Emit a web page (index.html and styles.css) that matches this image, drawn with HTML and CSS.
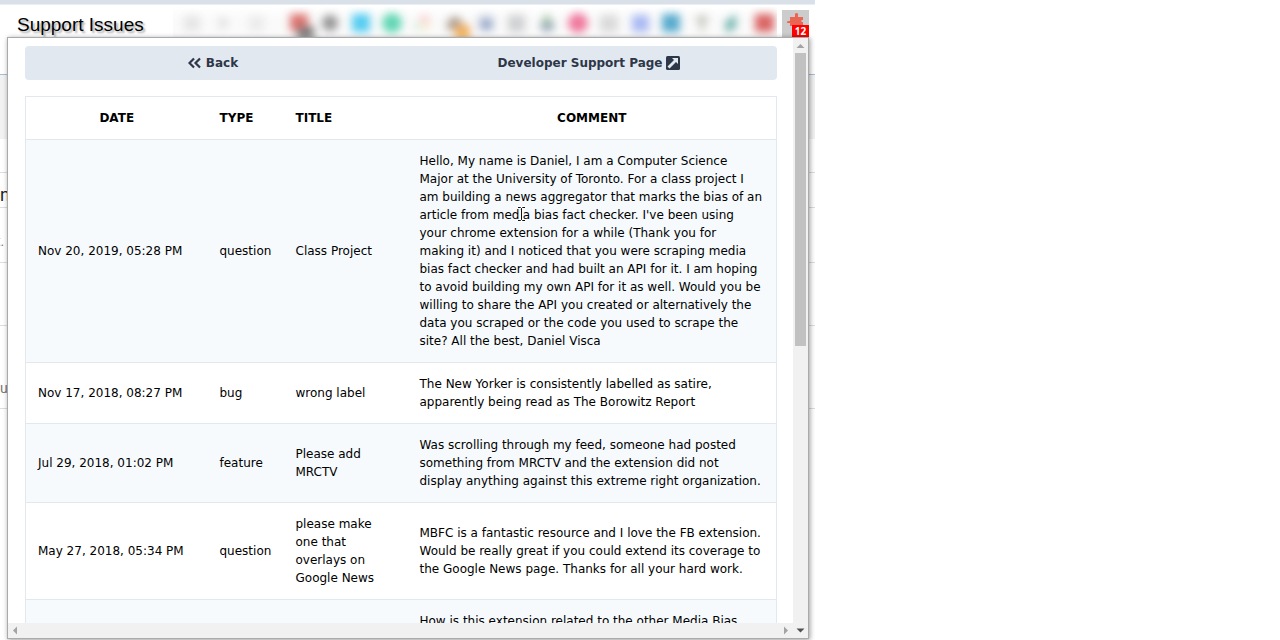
FILE: index.html
```html
<!DOCTYPE html>
<html lang="en">
<head>
<meta charset="utf-8">
<title>Support Issues</title>
<link rel="stylesheet" href="styles.css">
</head>
<body>
<div class="browser">
  <header class="toolbar">
    <h1 class="caption">Support Issues</h1>
    <svg class="extensions" viewBox="0 0 604 30" aria-hidden="true">
      <defs>
        <filter id="soft" x="-10%" y="-60%" width="120%" height="220%"><feGaussianBlur stdDeviation="4"/></filter>
        <linearGradient id="fade" x1="0" x2="0" y1="0" y2="1"><stop offset="0" stop-color="#fff"/><stop offset=".4" stop-color="#fafafa"/></linearGradient>
      </defs>
      <rect width="604" height="30" fill="url(#fade)"/>
      <g filter="url(#soft)" opacity=".88">
        <rect x="11" y="9" width="16" height="15" fill="#e2e2e2"/>
        <path d="M46 8l12 8-12 8z" fill="#dedede"/>
        <rect x="76" y="9" width="15" height="15" fill="#e9e9e9"/>
        <rect x="117" y="7" width="18" height="17" fill="#d9605c"/>
        <rect x="124" y="19" width="17" height="13" fill="#686868"/>
        <circle cx="157" cy="16" r="8" fill="#858585"/>
        <rect x="179" y="7" width="18" height="18" fill="#3cc6f0"/>
        <circle cx="219" cy="16" r="10" fill="#4bd2aa"/>
        <rect x="247" y="9" width="9" height="6" fill="#f9bfc0"/>
        <rect x="242" y="16" width="5" height="7" fill="#c7e7d0"/>
        <rect x="250" y="16" width="6" height="7" fill="#f7e5b9"/>
        <path d="M274 16q8-13 16 0v7h-16z" fill="#9d9080"/>
        <rect x="282" y="18" width="15" height="14" fill="#f0a543"/>
        <rect x="305" y="8" width="16" height="16" fill="#ccd5e3"/>
        <rect x="308" y="13" width="11" height="9" fill="#7890bd"/>
        <rect x="335" y="8" width="17" height="17" fill="#c9cbcd"/>
        <path d="M368 16l6-10 6 10z" fill="#98bd92"/>
        <path d="M367 16h15l-3 8h-10z" fill="#8498ad"/>
        <circle cx="405" cy="16" r="10" fill="#ee6690"/>
        <rect x="427" y="8" width="18" height="17" fill="#d5d5d5"/>
        <rect x="459" y="8" width="17" height="17" fill="#9fb0f2"/>
        <rect x="489" y="7" width="18" height="18" fill="#3f9fc7"/>
        <path d="M522 9h14l-5 8v7h-4v-7z" fill="#b6b6ad"/>
        <path d="M552 15l11-8v14l-10 5z" fill="#5eaaa4"/>
        <rect x="582" y="7" width="19" height="18" fill="#d65050"/>
      </g>
    </svg>
    <button class="puzzle" type="button" aria-label="Extension, 12 notifications">
      <svg width="17" height="16" viewBox="0 0 17 16" aria-hidden="true"><path fill="#ea6553" d="M3 4h5V2.500Q7.500 0 9.500 0T11 2.500V4h5v3h-1.500v2H16v4H3v-3H1.500Q0 10.500 0 9t3-1z"/></svg>
      <span class="badge">12</span>
    </button>
  </header>
  <main class="page">
    <div class="page-head"></div>
    <div class="line line-a"></div>
    <div class="line line-a big">n</div>
    <div class="line line-b">t.</div>
    <div class="line line-c"></div>
    <div class="line line-d">u</div>
  </main>

  <section class="popup">
    <div class="view">
      <nav class="actions">
        <button class="action" type="button">
          <svg width="14" height="12" viewBox="0 0 14 12" fill="none" stroke="#2d3748" stroke-width="2.200" aria-hidden="true"><path d="M6 1.500L1.500 6 6 10.500M12 1.500L7.500 6l4.500 4.500"/></svg>
          Back</button>
        <a class="action" href="#">Developer Support Page
          <svg width="14" height="14" viewBox="0 0 14 14" aria-hidden="true"><rect width="14" height="14" rx="1.500" fill="#2d3748"/><path d="M6 2h6v6l-2-2-6.500 6.500-2-2L8 4z" fill="#e2e8f0"/></svg></a>
      </nav>
      <table class="issues">
        <colgroup><col class="c-date"><col class="c-type"><col class="c-title"><col></colgroup>
        <thead><tr><th class="mid">DATE</th><th>TYPE</th><th>TITLE</th><th class="mid">COMMENT</th></tr></thead>
        <tbody>
          <tr><td>Nov 20, 2019, 05:28 PM</td><td>question</td><td>Class Project</td><td>Hello, My name is Daniel, I am a Computer Science Major at the University of Toronto. For a class project I am building a news aggregator that marks the bias of an article from media bias fact checker. I've been using your chrome extension for a while (Thank you for making it) and I noticed that you were scraping media bias fact checker and had built an API for it. I am hoping to avoid building my own API for it as well. Would you be willing to share the API you created or alternatively the data you scraped or the code you used to scrape the site? All the best, Daniel Visca</td></tr>
          <tr><td>Nov 17, 2018, 08:27 PM</td><td>bug</td><td>wrong label</td><td>The New Yorker is consistently labelled as satire, apparently being read as The Borowitz Report</td></tr>
          <tr><td>Jul 29, 2018, 01:02 PM</td><td>feature</td><td>Please add MRCTV</td><td>Was scrolling through my feed, someone had posted something from MRCTV and the extension did not display anything against this extreme right organization.</td></tr>
          <tr><td>May 27, 2018, 05:34 PM</td><td>question</td><td>please make one that overlays on Google News</td><td>MBFC is a fantastic resource and I love the FB extension. Would be really great if you could extend its coverage to the Google News page. Thanks for all your hard work.</td></tr>
          <tr class="last"><td></td><td></td><td></td><td>How is this extension related to the other Media Bias</td></tr>
        </tbody>
      </table>
    </div>
    <div class="vbar">
      <svg width="15" height="15" viewBox="0 0 15 15" aria-hidden="true"><path d="M3.500 10L7.500 6l4 4z" fill="#a3a3a3"/></svg>
      <div class="thumb"></div>
    </div>
    <div class="hbar">
      <svg width="15" height="15" viewBox="0 0 15 15" aria-hidden="true"><path d="M9 3.500L5 7.500l4 4z" fill="#a3a3a3"/></svg>
      <span class="ends">
        <svg width="15" height="15" viewBox="0 0 15 15" aria-hidden="true"><path d="M6 3.500l4 4-4 4z" fill="#a3a3a3"/></svg>
        <svg width="15" height="15" viewBox="0 0 15 15" aria-hidden="true"><path d="M3.500 5.500h8l-4 4z" fill="#505050"/></svg>
      </span>
    </div>
  </section>
  <svg class="cursor" width="9" height="16" viewBox="0 0 9 16" fill="none" aria-hidden="true"><path d="M1 1.500h2.500l1 1 1-1H8M4.500 2.500v11M1 14.500h2.500l1-1 1 1H8" stroke="#fff" stroke-width="3"/><path d="M1 1.500h2.500l1 1 1-1H8M4.500 2.500v11M1 14.500h2.500l1-1 1 1H8" stroke="#111"/></svg>
</div>
</body>
</html>
```
FILE: styles.css
```css
* { box-sizing: border-box; }
body {
  margin: 0;
  background: #fff;
  color: #000;
  font: 12px/18px "DejaVu Sans", sans-serif;
}
svg { display: block; flex: none; }
.browser {
  position: relative;
  height: 100vh;
  max-width: 815px;
  overflow: hidden;
}
.toolbar {
  display: flex;
  align-items: flex-start;
  height: 75px;
  border-top: 4px solid #d9e0e8;
  border-bottom: 1px solid #a9bdd3;
  box-shadow: inset 0 1px #e8eff7;
}
.caption {
  flex: 1;
  margin: 0;
  padding: 9px 0 0 17px;
  font: 19px/24px "Liberation Sans", Arial, sans-serif;
  text-shadow: 2px 2px 2px #aaa;
}
.extensions { width: 604px; height: 30px; margin-top: 3px; }
.puzzle {
  position: relative;
  width: 27px;
  height: 27px;
  margin: 6px 6px 0 5px;
  padding: 0 0 6px 5px;
  border: 0;
  background: #ccc;
}
.badge {
  position: absolute;
  right: 0;
  bottom: 0;
  width: 17px;
  background: #f00;
  color: #fff;
  font: bold 10px/12px "Noto Sans", sans-serif;
  text-align: center;
}
.page {
  color: #777;
  font: 14px/18px Roboto, sans-serif;
}
.page-head { height: 64px; background: #f2f2f2; }
.line { display: flex; align-items: center; border-bottom: 1px solid #ddd; }
.line-a { height: 35px; }
.page-head + .line-a { height: 34px; }
.line-b { height: 55px; padding-top: 12px; text-indent: -4px; }
.line-c { height: 63px; }
.line-d { height: 83px; align-items: flex-end; padding-bottom: 11px; }
.big { padding-top: 10px; color: #222; font-size: 18px; }
.popup {
  position: absolute;
  left: 7px;
  top: 37px;
  display: grid;
  grid-template: 585px 15px / 1fr 15px;
  width: 802px;
  border: 1px solid #aaa;
  background: #fff;
  box-shadow: 1px 1px 5px rgba(0, 0, 0, 0.4);
}
.view { overflow: hidden; padding: 8px 16px 0 17px; }
.actions {
  display: grid;
  grid-template-columns: 1fr 1fr;
  margin-bottom: 16px;
  border-radius: 4px;
  background: #e2e8f0;
}
.action {
  display: flex;
  align-items: center;
  justify-content: center;
  gap: 4px;
  height: 34px;
  padding: 0;
  border: 0;
  background: none;
  color: #2d3748;
  font: bold 12px/18px "DejaVu Sans", sans-serif;
  text-decoration: none;
}
.issues {
  width: 100%;
  table-layout: fixed;
  border-collapse: collapse;
  border: 1px solid #e2e8f0;
}
.c-date { width: 182px; }
.c-type { width: 76px; }
.c-title { width: 124px; }
.issues th, .issues td {
  padding: 12px;
  border-bottom: 1px solid #e2e8f0;
  text-align: left;
}
.issues th.mid { text-align: center; }
.issues td:nth-child(3) { padding-right: 32px; }
.issues tbody tr:nth-child(odd) { background: #f6fafd; }
.issues .last td { height: 61px; vertical-align: top; }
.vbar { background: #f1f1f1; }
.thumb { height: 293px; margin: 0 2px; background: #c1c1c1; }
.hbar {
  grid-column: 1 / -1;
  display: flex;
  justify-content: space-between;
  background: #f1f1f1;
}
.ends { display: flex; }
.cursor { position: absolute; left: 517px; top: 206px; }
```
